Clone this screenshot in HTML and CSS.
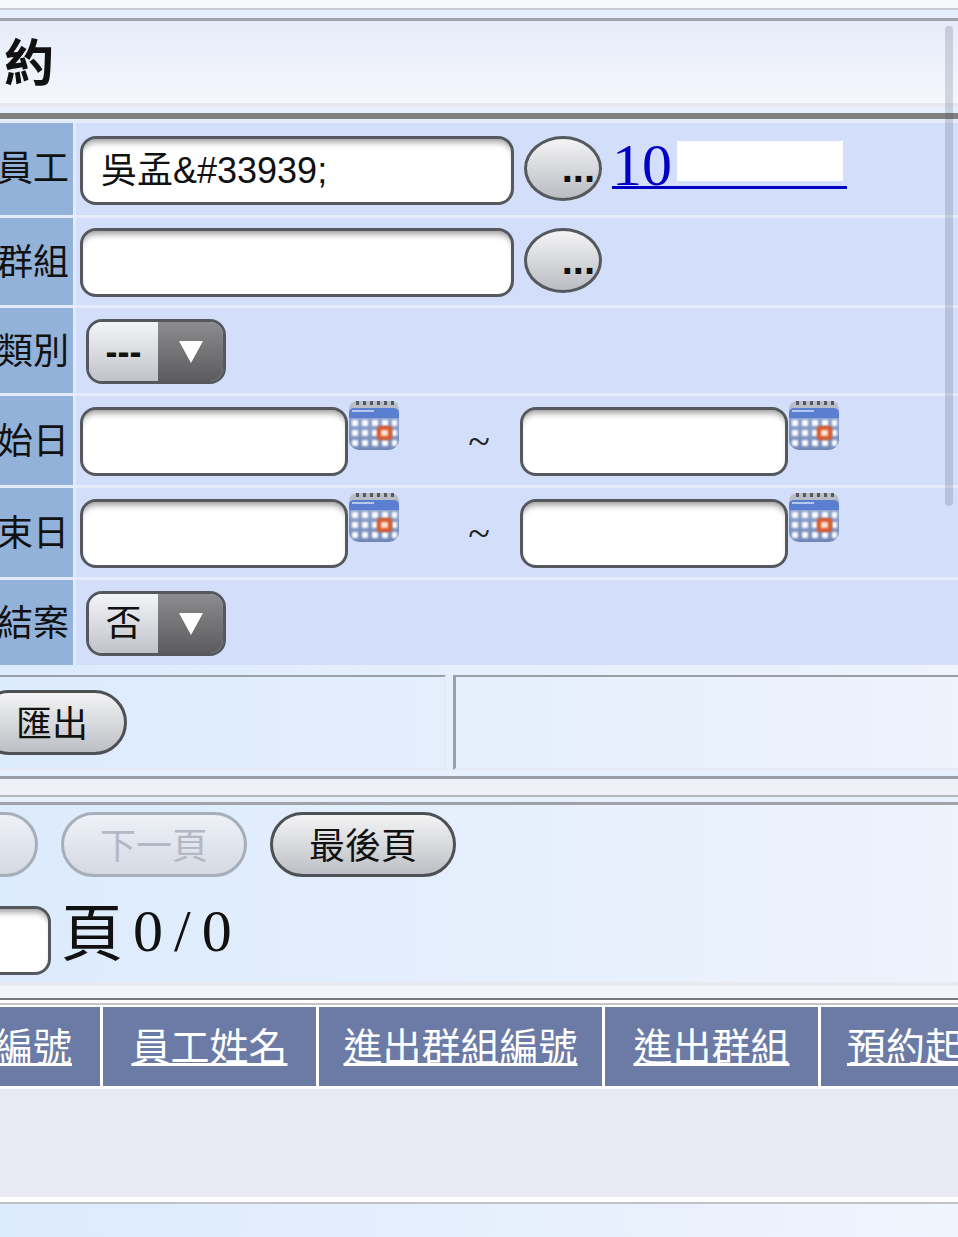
FILE: index.html
```html
<!DOCTYPE html>
<html lang="zh-Hant">
<head>
    <meta charset="UTF-8">
    <meta name="viewport" content="width=device-width, initial-scale=1.0">
    <title>預約</title>
    <link rel="stylesheet" href="styles.css">
</head>
<body>
    <svg class="defs" width="0" height="0" aria-hidden="true">
        <defs>
            <linearGradient id="cal-body" x1="0" y1="0" x2="0" y2="1">
                <stop offset="0" stop-color="#9db0d8"/>
                <stop offset="1" stop-color="#7086b8"/>
            </linearGradient>
            <filter id="cal-soft" x="-30%" y="-30%" width="160%" height="160%"><feGaussianBlur stdDeviation="0.9"/></filter>
            <symbol id="calendar" viewBox="0 0 52 50">
                <rect x="1" y="1" width="50" height="49" rx="10" fill="url(#cal-body)"/>
                <path d="M1 8a8 8 0 0 1 8-7h34a8 8 0 0 1 8 7v2H1z" fill="#b9bdc8"/>
                <path d="M1 18v-5a5 5 0 0 1 5-5h40a5 5 0 0 1 5 5v5z" fill="#5b7fd0"/>
                <rect x="4" y="10" width="22" height="2" fill="#b7c8ee"/>
                <path d="M8 1h3v4H8zM15 1h3v4h-3zM22 1h3v4h-3zM29 1h3v4h-3zM36 1h3v4h-3zM43 1h3v4h-3z" fill="#55585f"/>
                <g fill="#fff" filter="url(#cal-soft)">
                    <rect x="4" y="20" width="6" height="6"/><rect x="14" y="20" width="6" height="6"/><rect x="24" y="20" width="6" height="6"/><rect x="34" y="20" width="6" height="6"/><rect x="44" y="20" width="5" height="6"/>
                    <rect x="4" y="30" width="6" height="6"/><rect x="14" y="30" width="6" height="6"/><rect x="24" y="30" width="6" height="6"/><rect x="44" y="30" width="5" height="6"/>
                    <rect x="4" y="40" width="6" height="6"/><rect x="14" y="40" width="6" height="6"/><rect x="24" y="40" width="6" height="6"/><rect x="34" y="40" width="6" height="6"/><rect x="44" y="40" width="5" height="6"/>
                </g>
                <rect x="29" y="26" width="15" height="14" rx="2" fill="#d9582b" filter="url(#cal-soft)"/>
                <rect x="33" y="30" width="7" height="6" fill="#ffe3d4" filter="url(#cal-soft)"/>
            </symbol>
        </defs>
    </svg>

    <div class="page">
        <div class="top-strip"></div>

        <h1 class="title">預約</h1>

        <!-- 查詢條件 -->
        <div class="form-rows">
            <div class="row">
                <div class="label label-first">員工</div>
                <div class="field field-first">
                    <input class="text-input wide" type="text" value="吳孟&amp;#33939;">
                    <button class="pick-btn" type="button">...</button>
                    <a class="emp-link" href="#">10<span class="redacted"></span></a>
                </div>
            </div>
            <div class="row">
                <div class="label">進出群組</div>
                <div class="field field-second">
                    <input class="text-input wide" type="text">
                    <button class="pick-btn" type="button">...</button>
                </div>
            </div>
            <div class="row">
                <div class="label">預約類別</div>
                <div class="field">
                    <div class="select"><span class="select-value dashes">---</span><span class="select-arrow"><svg width="26" height="24" viewBox="0 0 26 24"><path d="M1 1h24L13 23z" fill="#fff"/></svg></span></div>
                </div>
            </div>
            <div class="row">
                <div class="label">預約起始日</div>
                <div class="field">
                    <input class="text-input date" type="text">
                    <svg class="cal-icon"><use href="#calendar"/></svg>
                    <span class="tilde">~</span>
                    <input class="text-input date" type="text">
                    <svg class="cal-icon"><use href="#calendar"/></svg>
                </div>
            </div>
            <div class="row">
                <div class="label">預約結束日</div>
                <div class="field">
                    <input class="text-input date" type="text">
                    <svg class="cal-icon"><use href="#calendar"/></svg>
                    <span class="tilde">~</span>
                    <input class="text-input date" type="text">
                    <svg class="cal-icon"><use href="#calendar"/></svg>
                </div>
            </div>
            <div class="row">
                <div class="label">是否結案</div>
                <div class="field">
                    <div class="select"><span class="select-value">否</span><span class="select-arrow"><svg width="26" height="24" viewBox="0 0 26 24"><path d="M1 1h24L13 23z" fill="#fff"/></svg></span></div>
                </div>
            </div>
        </div>

        <!-- 按鈕列 -->
        <div class="toolbar">
            <div class="tool-left"><button class="btn" type="button">匯出</button></div>
            <div class="tool-right"></div>
        </div>
        <div class="divider"></div>

        <!-- 分頁 -->
        <div class="pager">
            <div class="pager-buttons">
                <button class="btn" type="button" disabled>上一頁</button>
                <button class="btn" type="button" disabled>下一頁</button>
                <button class="btn" type="button">最後頁</button>
            </div>
            <div class="page-jump">
                <input class="text-input page-input" type="text">
                <span class="page-word">頁</span>
                <span class="page-count">0 / 0</span>
            </div>
        </div>
        <div class="divider-bottom"></div>

        <!-- 結果表格 -->
        <div class="grid-head">
            <a class="head-cell" href="#">員工編號</a>
            <a class="head-cell" href="#">員工姓名</a>
            <a class="head-cell" href="#">進出群組編號</a>
            <a class="head-cell" href="#">進出群組</a>
            <a class="head-cell" href="#">預約起始日</a>
        </div>
        <div class="grid-body"></div>
        <div class="page-foot"></div>
    </div>

    <div class="scroll-thumb"></div>
</body>
</html>
```

FILE: styles.css
```css
html, body {
    margin: 0;
    padding: 0;
    height: 1237px;
    overflow: hidden;
    background-color: #e6effd;
}
body {
    position: relative;
    font-family: "Noto Sans CJK TC", "Liberation Sans", sans-serif;
    color: #111;
}
.defs {
    position: absolute;
}
.page {
    width: 1300px;
    margin-left: -160px;
}
.top-strip {
    height: 8px;
    background-color: #f6f8fc;
    border-bottom: 2px solid #c9cacf;
    margin-bottom: 8px;
}
.title {
    margin: 0;
    height: 82px;
    padding-left: 110px;
    border-top: 3px solid #a0a2aa;
    border-bottom: 4px solid #e8e8ee;
    font-size: 50px;
    line-height: 76px;
    font-weight: 700;
    letter-spacing: 4px;
    color: #111;
    background: linear-gradient(#e6ebf8, #f5f7fd);
}
.form-rows {
    margin-top: 6px;
    border-top: 6px solid #808080;
    padding-top: 4px;
    background-color: #e4ecfc;
    display: flex;
    flex-direction: column;
    gap: 3px;
}
.row {
    display: flex;
    gap: 3px;
}
.label {
    width: 233px;
    flex: none;
    box-sizing: border-box;
    padding: 0 4px 5px 0;
    display: flex;
    align-items: center;
    justify-content: flex-end;
    font-size: 36px;
    white-space: nowrap;
    background-color: #93b2da;
}
.label-first {
    padding-bottom: 8px;
}
.field {
    flex: 1;
    display: flex;
    align-items: flex-start;
    padding: 11px 0 9px 4px;
    background-color: #d3dffa;
}
.field-first {
    padding-top: 13px;
    padding-bottom: 10px;
}
.field-second {
    padding-top: 10px;
    padding-bottom: 8px;
}
.text-input {
    box-sizing: border-box;
    height: 69px;
    padding: 0 18px 7px;
    border: 3px solid #55585c;
    border-radius: 16px;
    font-family: "Liberation Sans", "Noto Sans CJK TC", sans-serif;
    font-size: 36px;
    color: #111;
    background-color: #fff;
    box-shadow: inset 0 7px 6px -4px rgba(0, 0, 0, 0.4);
    outline: none;
}
.wide {
    width: 434px;
}
.date {
    width: 268px;
}
.pick-btn {
    width: 78px;
    height: 65px;
    margin-left: 10px;
    padding: 0 4px 2px 0;
    border: 3px solid #55585c;
    border-radius: 50% / 50%;
    font-family: "Liberation Sans", sans-serif;
    font-size: 40px;
    font-weight: 700;
    line-height: 40px;
    text-align: right;
    color: #111;
    background: linear-gradient(#f4f4f5, #b9bcc2);
}
.emp-link {
    display: flex;
    align-items: flex-start;
    height: 48px;
    margin: 2px 0 0 10px;
    font-family: "Liberation Serif", serif;
    font-size: 60px;
    line-height: 54px;
    color: #0000c4;
    text-decoration: none;
    border-bottom: 3px solid #0000c4;
    white-space: nowrap;
}
.redacted {
    width: 166px;
    height: 40px;
    margin: 3px 4px 0 5px;
    background-color: #fff;
}
.select {
    display: flex;
    box-sizing: border-box;
    width: 140px;
    height: 65px;
    margin-left: 6px;
    border: 3px solid #55585c;
    border-radius: 16px;
    overflow: hidden;
}
.select-value {
    width: 69px;
    flex: none;
    text-align: center;
    font-size: 36px;
    line-height: 53px;
    background: linear-gradient(#f4f5f7, #bfc2c9);
}
.dashes {
    font-family: "Liberation Sans", sans-serif;
    font-weight: 700;
    line-height: 59px;
}
.select-arrow {
    flex: 1;
    display: flex;
    align-items: center;
    justify-content: center;
    background: linear-gradient(#8c8c8e, #5c5c5e);
}
.cal-icon {
    width: 52px;
    height: 50px;
    flex: none;
    margin: -7px 0 0 0;
}
.tilde {
    width: 120px;
    box-sizing: border-box;
    padding-left: 38px;
    flex: none;
    text-align: center;
    font-family: "Liberation Serif", serif;
    font-size: 40px;
    line-height: 69px;
    color: #222;
}
.toolbar {
    display: flex;
    gap: 7px;
    padding-top: 10px;
    background: linear-gradient(to right, #dcebfd 160px, #eef3fc 1118px);
}
.tool-left {
    box-sizing: border-box;
    width: 606px;
    height: 95px;
    padding-top: 13px;
    padding-left: 137px;
    border-top: 2px solid #9a9fa6;
    border-right: 2px solid #e6eaf3;
    border-bottom: 2px solid #e6eaf3;
}
.tool-right {
    flex: 1;
    height: 95px;
    box-sizing: border-box;
    border-top: 2px solid #9a9fa6;
    border-left: 3px solid #9a9fa6;
    border-bottom: 2px solid #e6eaf3;
}
.btn {
    height: 65px;
    padding: 0 36px 3px;
    border: 3px solid #4d5054;
    border-radius: 33px;
    font-family: "Noto Sans CJK TC", sans-serif;
    font-size: 36px;
    line-height: 56px;
    color: #111;
    background: linear-gradient(#f4f4f5, #bcbfc5);
    white-space: nowrap;
}
.btn:disabled {
    color: #b3b8c4;
    border-color: #a8aeb8;
    background: linear-gradient(#eef1f7, #d4d9e3);
}
.divider {
    height: 16px;
    margin-top: 6px;
    border-top: 3px solid #9a9da5;
    border-bottom: 2px solid #b4b6bc;
    background-color: #eef1f8;
    margin-bottom: 5px;
}
.pager {
    height: 180px;
    box-sizing: border-box;
    border-top: 3px solid #a0a2a8;
    padding-top: 7px;
    background: linear-gradient(to right, #dcebfd 160px, #eef3fc 1118px);
}
.pager-buttons {
    display: flex;
    gap: 23px;
    padding-left: 12px;
}
.page-jump {
    display: flex;
    align-items: flex-start;
    margin-top: 29px;
    padding-left: 91px;
}
.page-input {
    width: 120px;
}
.page-word {
    margin: -17px 0 0 10px;
    font-size: 62px;
    line-height: 80px;
    color: #111;
}
.page-count {
    margin: -13px 0 0 10px;
    font-family: "Liberation Serif", serif;
    font-size: 60px;
    line-height: 76px;
    word-spacing: -4px;
    white-space: pre;
}
.divider-bottom {
    height: 12px;
    border-top: 4px solid #e8eaf2;
    border-bottom: 2px solid #78797e;
    background-color: #f1f4fb;
    box-shadow: 0 3px 0 #fff, 0 5px 0 #c4c4c8, 0 7px 0 #fff;
    margin-bottom: 7px;
}
.grid-head {
    display: grid;
    grid-template-columns: 260px 213px 283px 213px 300px;
    gap: 3px;
    height: 79px;
    background-color: #fff;
}
.head-cell {
    display: flex;
    align-items: center;
    justify-content: center;
    padding-bottom: 6px;
    box-sizing: border-box;
    font-size: 39px;
    color: #fff;
    text-decoration: underline;
    white-space: nowrap;
    background-color: #6b7ba5;
}
.head-cell:first-child {
    justify-content: flex-end;
    padding-right: 28px;
}
.head-cell:last-child {
    justify-content: flex-start;
    padding-left: 26px;
}
.grid-body {
    height: 108px;
    border-top: 3px solid #fff;
    border-bottom: 5px solid #fff;
    background-color: #e8e9f3;
}
.page-foot {
    height: 60px;
    border-top: 2px solid #c0c1c6;
    background: linear-gradient(to right, #dcebfd 160px, #f0f4fd 1118px);
}
.scroll-thumb {
    position: absolute;
    top: 26px;
    left: 945px;
    width: 8px;
    height: 480px;
    border-radius: 4px;
    background-color: rgba(70, 80, 110, 0.2);
}
```
